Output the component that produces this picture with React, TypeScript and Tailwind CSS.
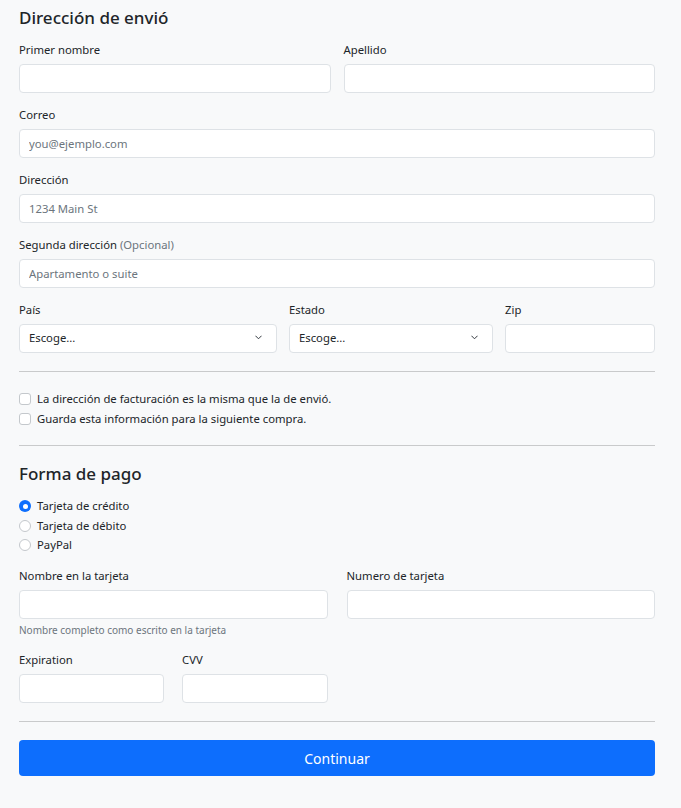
import React from "react";

const font = { fontFamily: '"Segoe UI", "Noto Sans", "Open Sans", sans-serif' };

function Label({ children, className = "" }: { children: React.ReactNode; className?: string }) {
  return <label className={`block text-[11.3px] leading-[18px] text-[#212529] mb-[5px] ${className}`}>{children}</label>;
}

function Input({ placeholder }: { placeholder?: string }) {
  return (
    <input
      placeholder={placeholder}
      className="block w-full h-[29px] rounded-[4px] border border-[#dee2e6] bg-white px-[9px] text-[11.3px] text-[#212529] placeholder:text-[#6c757d] outline-none"
    />
  );
}

function Select() {
  return (
    <div className="relative h-[29px] w-full rounded-[4px] border border-[#dee2e6] bg-white flex items-center px-[9px]">
      <span className="text-[11.3px] text-[#212529]">Escoge...</span>
      <svg className="absolute right-[14px] top-[10px]" width="7" height="5" viewBox="0 0 7 5" fill="none">
        <path d="M0.7 1 L3.5 3.8 L6.3 1" stroke="#343a40" strokeWidth="1" strokeLinecap="round" strokeLinejoin="round" />
      </svg>
    </div>
  );
}

function Field({ label, placeholder, className = "" }: { label: React.ReactNode; placeholder?: string; className?: string }) {
  return (
    <div className={className}>
      <Label>{label}</Label>
      <Input placeholder={placeholder} />
    </div>
  );
}

function Check({ label }: { label: string }) {
  return (
    <div className="flex items-center h-[18px]">
      <span className="w-[12px] h-[12px] rounded-[3px] border border-[#c4c8cc] bg-white shrink-0" />
      <span className="ml-[6px] text-[11.3px] leading-[18px] text-[#212529]">{label}</span>
    </div>
  );
}

function Radio({ label, checked }: { label: string; checked?: boolean }) {
  return (
    <div className="flex items-center h-[18px]">
      {checked ? (
        <span className="w-[12px] h-[12px] rounded-full bg-[#0d6efd] flex items-center justify-center shrink-0">
          <span className="w-[5px] h-[5px] rounded-full bg-white" />
        </span>
      ) : (
        <span className="w-[12px] h-[12px] rounded-full border border-[#c4c8cc] bg-white shrink-0" />
      )}
      <span className="ml-[6px] text-[11.3px] leading-[18px] text-[#212529]">{label}</span>
    </div>
  );
}

function Hr() {
  return <div className="h-px bg-[#c9cacb] w-full" />;
}

export default function App() {
  return (
    <div className="min-h-[808px] w-full bg-[#f8f9fa]" style={font}>
      <div className="px-[19px] pt-[7px] w-[674px]">
        <h4 className="text-[17px] leading-[22px] font-medium text-[#212529] mb-[12px]">Dirección de envió</h4>

        <div className="flex flex-col gap-[13px]">
          <div className="flex gap-[13px]">
            <Field label="Primer nombre" className="flex-1" />
            <Field label="Apellido" className="flex-1" />
          </div>
          <Field label="Correo" placeholder="you@ejemplo.com" />
          <Field label="Dirección" placeholder="1234 Main St" />
          <Field
            label={
              <>
                Segunda dirección <span className="text-[#6c757d]">(Opcional)</span>
              </>
            }
            placeholder="Apartamento o suite"
          />
          <div className="flex gap-[12px]">
            <div className="w-[258px]">
              <Label>País</Label>
              <Select />
            </div>
            <div className="w-[204px]">
              <Label>Estado</Label>
              <Select />
            </div>
            <Field label="Zip" className="w-[150px]" />
          </div>
        </div>

        <div className="mt-[18px]">
          <Hr />
        </div>

        <div className="mt-[18px] flex flex-col gap-[2px]">
          <Check label="La dirección de facturación es la misma que la de envió." />
          <Check label="Guarda esta información para la siguiente compra." />
        </div>

        <div className="mt-[17px]">
          <Hr />
        </div>

        <h4 className="mt-[17px] text-[17px] leading-[22px] font-medium text-[#212529] mb-[12px]">Forma de pago</h4>

        <div className="flex flex-col gap-[1.5px]">
          <Radio label="Tarjeta de crédito" checked />
          <Radio label="Tarjeta de débito" />
          <Radio label="PayPal" />
        </div>

        <div className="mt-[13px] flex gap-[19px]">
          <div className="w-[309px]">
            <Label>Nombre en la tarjeta</Label>
            <Input />
            <div className="mt-[3px] text-[10px] leading-[16px] text-[#6c757d]">Nombre completo como escrito en la tarjeta</div>
          </div>
          <Field label="Numero de tarjeta" className="w-[309px]" />
        </div>

        <div className="mt-[13px] flex gap-[18px]">
          <Field label="Expiration" className="w-[145px]" />
          <Field label="CVV" className="w-[146px]" />
        </div>

        <div className="mt-[18px]">
          <Hr />
        </div>

        <button className="mt-[18px] w-full h-[36px] rounded-[4px] bg-[#0d6efd] text-white text-[14px]">Continuar</button>
      </div>
    </div>
  );
}
